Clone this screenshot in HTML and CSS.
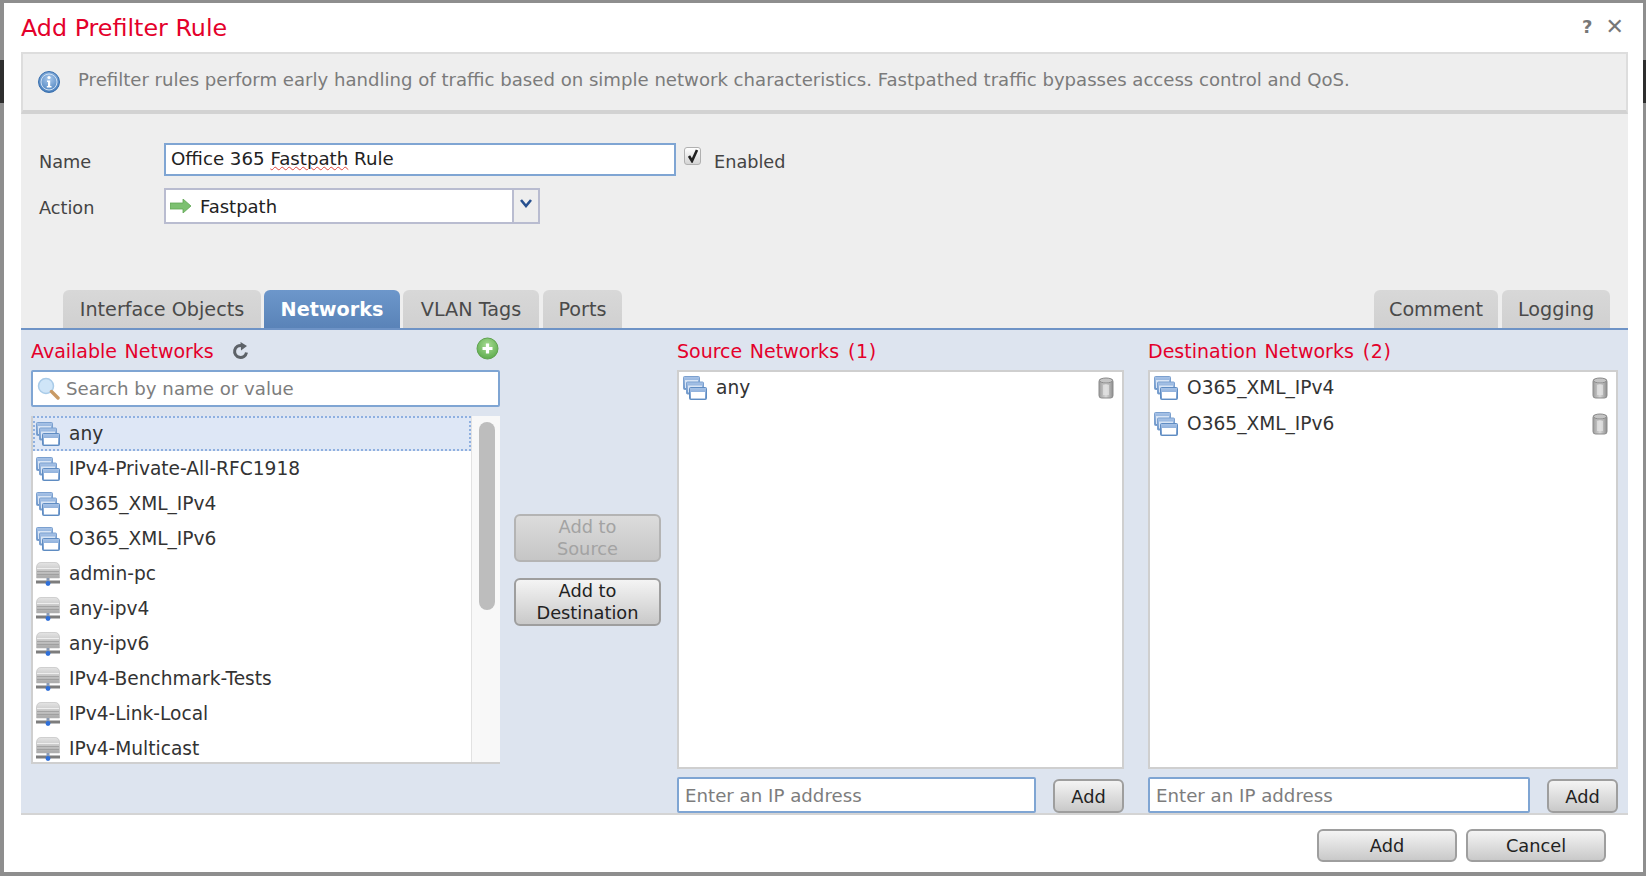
FILE: index.html
```html
<!DOCTYPE html>
<html lang="en">
<head>
<meta charset="utf-8">
<title>Add Prefilter Rule</title>
<link rel="stylesheet" href="styles.css">
</head>
<body>

<svg class="icon_defs" width="0" height="0">
  <defs>
    <linearGradient id="win_grad" x1="0" y1="0" x2="0" y2="1">
      <stop offset="0" stop-color="#a9c4e8"/>
      <stop offset="1" stop-color="#6a94c8"/>
    </linearGradient>
    <linearGradient id="host_grad" x1="0" y1="0" x2="0" y2="1">
      <stop offset="0" stop-color="#e4e4e4"/>
      <stop offset="0.4" stop-color="#cfcfcf"/>
      <stop offset="1" stop-color="#a8a8a8"/>
    </linearGradient>
    <linearGradient id="trash_grad" x1="0" y1="0" x2="1" y2="0">
      <stop offset="0" stop-color="#9c9c9c"/>
      <stop offset="0.5" stop-color="#d8d8d8"/>
      <stop offset="1" stop-color="#8e8e8e"/>
    </linearGradient>
    <radialGradient id="info_grad" cx="0.5" cy="0.35" r="0.7">
      <stop offset="0" stop-color="#a8c8ec"/>
      <stop offset="1" stop-color="#3f78b8"/>
    </radialGradient>
    <radialGradient id="plus_grad" cx="0.5" cy="0.35" r="0.7">
      <stop offset="0" stop-color="#a8dc94"/>
      <stop offset="1" stop-color="#58a848"/>
    </radialGradient>
    <symbol id="group_icon" viewBox="0 0 24 24">
      <rect x="0.5" y="0.5" width="16" height="13" rx="1" fill="url(#win_grad)" stroke="#7ba0cf"/>
      <rect x="2" y="4" width="13" height="8" fill="#d9e5f5"/>
      <rect x="3.5" y="6" width="17" height="12" rx="1" fill="url(#win_grad)" stroke="#7ba0cf"/>
      <rect x="5" y="9.5" width="14" height="7" fill="#d9e5f5"/>
      <rect x="6.5" y="11.5" width="17" height="12" rx="1" fill="url(#win_grad)" stroke="#5f8cc2"/>
      <rect x="8" y="16" width="14" height="6.5" fill="#fff"/>
    </symbol>
    <symbol id="host_icon" viewBox="0 0 24 24">
      <path d="M0.5 5 Q1 0.5 5 0.5 H19 Q23 0.5 23.5 5 V16 H0.5 Z" fill="url(#host_grad)" stroke="#b8b8b8" stroke-width="0.6"/>
      <rect x="1" y="6" width="22" height="1" fill="#eee"/>
      <rect x="1" y="9" width="22" height="1" fill="#a4a4a4"/>
      <rect x="1" y="12" width="22" height="1" fill="#a0a0a0"/>
      <rect x="0" y="18.5" width="24" height="3" fill="#7d7d7d"/>
      <rect x="10.5" y="16" width="3" height="4" fill="#8b9bb4"/>
      <circle cx="12" cy="21.5" r="2.4" fill="#2f6fd8"/>
    </symbol>
    <symbol id="trash_icon" viewBox="0 0 16 22">
      <rect x="1" y="2" width="14" height="19" rx="2.5" fill="url(#trash_grad)" stroke="#8b8b8b"/>
      <ellipse cx="8" cy="3.5" rx="6.5" ry="2.5" fill="#c4c4c4" stroke="#8b8b8b"/>
      <rect x="5" y="8" width="6" height="10" fill="#e4e4e4" opacity="0.7"/>
    </symbol>
  </defs>
</svg>

<div class="modal">

  <div class="modal_head">
    <h1>Add Prefilter Rule</h1>
    <div class="modal_tools">
      <span>?</span>
      <span class="close_x">✕</span>
    </div>
  </div>

  <div class="info_bar">
    <svg class="info_icon" width="22" height="22" viewBox="0 0 22 22">
      <circle cx="11" cy="11" r="10.5" fill="url(#info_grad)" stroke="#3a70ae"/>
      <circle cx="11" cy="11" r="8" fill="none" stroke="#cfe0f3" stroke-width="1"/>
      <circle cx="11" cy="6.5" r="1.6" fill="#fff"/>
      <path d="M9 9.5 H12.2 V15 H13.5 V16.5 H8.8 V15 H10 V11 H9 Z" fill="#fff"/>
    </svg>
    <p>Prefilter rules perform early handling of traffic based on simple network characteristics. Fastpathed traffic bypasses access control and QoS.</p>
  </div>

  <div class="rule_form">
    <div class="form_row name_row">
      <label>Name</label>
      <div class="text_box name_box">Office 365 <span class="misspelt">Fastpath</span> Rule</div>
      <span class="check_box">
        <svg width="12" height="14" viewBox="0 0 12 14"><path d="M2 7 L5 12 L10 1" fill="none" stroke="#222" stroke-width="2.6"/></svg>
      </span>
      <label class="enabled_label">Enabled</label>
    </div>
    <div class="form_row action_row">
      <label>Action</label>
      <div class="select_box">
        <svg width="22" height="14" viewBox="0 0 22 14"><path d="M0 4 H13 V0 L21 7 L13 14 V10 H0 Z" fill="#7cc070" stroke="#5fa653" stroke-width="0.8"/></svg>
        <span class="select_value">Fastpath</span>
        <span class="select_arrow">
          <svg width="12" height="9" viewBox="0 0 12 9"><path d="M1 1 L6 7 L11 1" fill="none" stroke="#27508f" stroke-width="2.6"/></svg>
        </span>
      </div>
    </div>
  </div>

  <div class="tab_bar">
    <div class="tab_group">
      <div class="tab tab_interface">Interface Objects</div>
      <div class="tab tab_networks active">Networks</div>
      <div class="tab tab_vlan">VLAN Tags</div>
      <div class="tab tab_ports">Ports</div>
    </div>
    <div class="tab_group">
      <div class="tab tab_comment">Comment</div>
      <div class="tab tab_logging">Logging</div>
    </div>
  </div>

  <div class="tab_body">

    <div class="col_available">
      <div class="col_title">
        <span>Available Networks</span>
        <svg class="refresh_icon" width="18" height="18" viewBox="0 0 18 18">
          <path d="M14.5 10.5 A6 6 0 1 1 10 3.6" fill="none" stroke="#5d6268" stroke-width="3"/>
          <path d="M8.5 0 L15 4 L9 8.5 Z" fill="#5d6268"/>
        </svg>
        <svg class="plus_icon" width="23" height="23" viewBox="0 0 23 23">
          <circle cx="11.5" cy="11.5" r="10.5" fill="url(#plus_grad)" stroke="#5ea24e"/>
          <path d="M11.5 6.5 V16.5 M6.5 11.5 H16.5" stroke="#fff" stroke-width="3.2"/>
        </svg>
      </div>
      <div class="text_box search_box">
        <svg width="23" height="23" viewBox="0 0 23 23">
          <circle cx="9" cy="9" r="7.5" fill="#cfe5f8" stroke="#a9cbe8" stroke-width="1.5"/>
          <path d="M14.5 14.5 L21 21" stroke="#c99a64" stroke-width="3.4" stroke-linecap="round"/>
        </svg>
        <span class="hint">Search by name or value</span>
      </div>
      <div class="network_list">
        <div class="list_rows">
          <div class="list_row selected"><svg class="row_icon"><use href="#group_icon"/></svg>any</div>
          <div class="list_row"><svg class="row_icon"><use href="#group_icon"/></svg>IPv4-Private-All-RFC1918</div>
          <div class="list_row"><svg class="row_icon"><use href="#group_icon"/></svg>O365_XML_IPv4</div>
          <div class="list_row"><svg class="row_icon"><use href="#group_icon"/></svg>O365_XML_IPv6</div>
          <div class="list_row"><svg class="row_icon"><use href="#host_icon"/></svg>admin-pc</div>
          <div class="list_row"><svg class="row_icon"><use href="#host_icon"/></svg>any-ipv4</div>
          <div class="list_row"><svg class="row_icon"><use href="#host_icon"/></svg>any-ipv6</div>
          <div class="list_row"><svg class="row_icon"><use href="#host_icon"/></svg>IPv4-Benchmark-Tests</div>
          <div class="list_row"><svg class="row_icon"><use href="#host_icon"/></svg>IPv4-Link-Local</div>
          <div class="list_row"><svg class="row_icon"><use href="#host_icon"/></svg>IPv4-Multicast</div>
        </div>
        <div class="scroll_track"><div class="scroll_thumb"></div></div>
      </div>
    </div>

    <div class="col_buttons">
      <button class="btn add_btn" disabled>Add to<br>Source</button>
      <button class="btn add_btn">Add to<br>Destination</button>
    </div>

    <div class="col_source">
      <div class="col_title"><span>Source Networks</span><span class="count">(1)</span></div>
      <div class="picked_box">
        <div class="picked_row"><svg class="row_icon"><use href="#group_icon"/></svg><span class="picked_name">any</span><svg class="trash_icon"><use href="#trash_icon"/></svg></div>
      </div>
      <div class="ip_row">
        <div class="text_box ip_box"><span class="hint">Enter an IP address</span></div>
        <button class="btn small_btn">Add</button>
      </div>
    </div>

    <div class="col_dest">
      <div class="col_title"><span>Destination Networks</span><span class="count">(2)</span></div>
      <div class="picked_box">
        <div class="picked_row"><svg class="row_icon"><use href="#group_icon"/></svg><span class="picked_name">O365_XML_IPv4</span><svg class="trash_icon"><use href="#trash_icon"/></svg></div>
        <div class="picked_row"><svg class="row_icon"><use href="#group_icon"/></svg><span class="picked_name">O365_XML_IPv6</span><svg class="trash_icon"><use href="#trash_icon"/></svg></div>
      </div>
      <div class="ip_row">
        <div class="text_box ip_box"><span class="hint">Enter an IP address</span></div>
        <button class="btn small_btn">Add</button>
      </div>
    </div>

  </div>

  <div class="modal_foot">
    <button class="btn foot_btn">Add</button>
    <button class="btn foot_btn">Cancel</button>
  </div>

</div>

</body>
</html>
```

FILE: styles.css
```css
*,*:after,*:before{
	box-sizing: border-box;
}
html,body{
	height: 100%;
}
body{
	margin: 0;
	padding: 3px 3px 4px 4px;
	overflow: hidden;
	font-family: "DejaVu Sans", sans-serif;
	font-size: 18px;
	color: #333;
	background: linear-gradient(to bottom, #8e8e8e 0, #8e8e8e 60px, #2e2e2e 60px, #2e2e2e 103px, #8e8e8e 103px);
}
.icon_defs{
	position: absolute;
}

.modal{
	width: 1639px;
	height: 869px;
	background: #fff;
	display: flex;
	flex-direction: column;
	padding: 0 15px 0 17px;
}

.modal_head{
	height: 49px;
	display: flex;
	align-items: center;
	justify-content: space-between;
}
h1{
	margin: 0;
	font-size: 23.8px;
	font-weight: normal;
	color: #e4002b;
}
.modal_tools{
	display: flex;
	align-items: center;
	gap: 13px;
	color: #777;
	font-size: 18px;
	font-weight: bold;
	margin: 0 4px 2px 0;
}
.close_x{
	font-size: 22px;
}

.info_bar{
	height: 62px;
	background: #eee;
	border-top: 2px solid #ddd;
	border-left: 2px solid #ddd;
	border-right: 2px solid #ddd;
	border-bottom: 4px solid #d2d2d2;
	display: flex;
	align-items: center;
	padding-left: 15px;
	color: #7b7b7b;
}
.info_icon{
	flex-shrink: 0;
}
.info_bar p{
	margin: 0 0 6px 18px;
	font-size: 18.1px;
	white-space: nowrap;
}

.rule_form{
	height: 175px;
	background: #eee;
	padding: 29px 0 0 18px;
}
.form_row{
	display: flex;
	align-items: center;
}
.form_row label{
	width: 125px;
	font-size: 17.7px;
	color: #444;
	padding-top: 4px;
}
.name_row{
	height: 33px;
}
.action_row{
	height: 36px;
	margin-top: 12px;
}
.text_box{
	background: #fff;
	border: 2px solid #7fa5d3;
	display: flex;
	align-items: center;
	white-space: pre;
}
.name_box{
	width: 512px;
	height: 33px;
	padding-left: 5px;
	color: #222;
	display: block;
	font-size: 18.2px;
	line-height: 28px;
}
.misspelt{
	text-decoration: underline wavy #e0443a 1px;
}
.check_box{
	width: 17px;
	height: 18px;
	margin: 0 0 8px 8px;
	background: linear-gradient(to bottom, #fff, #d4d4d4);
	border: 1px solid #b0b0b0;
	border-radius: 3px;
	display: flex;
	align-items: center;
	justify-content: center;
}
.form_row .enabled_label{
	width: auto;
	margin-left: 13px;
}
.select_box{
	width: 376px;
	height: 36px;
	background: #fff;
	border: 2px solid #b9bcd0;
	display: flex;
	align-items: center;
	padding-left: 4px;
	color: #222;
}
.select_value{
	margin-left: 8px;
	flex: 1;
}
.select_arrow{
	width: 26px;
	height: 100%;
	background: #eee;
	border-left: 2px solid #b9bcd0;
	display: flex;
	align-items: center;
	justify-content: center;
	padding-bottom: 6px;
}

.tab_bar{
	display: flex;
	justify-content: space-between;
	align-items: flex-end;
	height: 39px;
	padding: 0 18px 0 42px;
	background: #eee;
}
.tab_group{
	display: flex;
	gap: 3px;
}
.tab{
	height: 38px;
	background: linear-gradient(to bottom, #d8d8d8, #d0d0d0);
	border-radius: 6px 6px 0 0;
	display: flex;
	align-items: center;
	justify-content: center;
	color: #4a4a4a;
	font-size: 19.2px;
}
.tab.active{
	background: linear-gradient(to bottom, #6d97cb, #5a83b8);
	color: #fff;
	font-weight: bold;
}
.tab_interface{ width: 198px; }
.tab_networks{ width: 136px; }
.tab_vlan{ width: 136px; }
.tab_ports{ width: 79px; margin-left: 1px; }
.tab_comment{ width: 124px; }
.tab_logging{ width: 108px; margin-left: 1px; }

.tab_body{
	height: 487px;
	background: #dde4ef;
	border-top: 2px solid #6e93c6;
	border-bottom: 2px solid #d4d4d4;
	display: flex;
	padding: 1px 0 0 10px;
	flex-shrink: 0;
}
.col_title{
	height: 39px;
	display: flex;
	align-items: center;
	color: #e4002b;
	font-size: 19px;
	word-spacing: 1.5px;
}
.count{
	margin-left: 9px;
	letter-spacing: 0.6px;
}
.refresh_icon{
	margin-left: 18px;
}
.plus_icon{
	margin-left: auto;
	margin-right: 1px;
	margin-bottom: 4px;
}

.col_available{
	width: 469px;
}
.search_box{
	height: 37px;
	padding-left: 4px;
	border-radius: 2px;
}
.hint{
	color: #7d7d7d;
	font-size: 18.2px;
	margin-left: 6px;
}
.ip_box .hint{
	margin-left: 0;
}
.network_list{
	margin-top: 9px;
	height: 348px;
	background: #fff;
	border: 2px solid #cfcfcf;
	border-top: 0;
	border-right: 0;
	display: flex;
	overflow: hidden;
}
.list_rows{
	width: 438px;
	flex-shrink: 0;
}
.list_row{
	height: 35px;
	display: flex;
	align-items: center;
	padding-left: 3px;
	color: #333;
	font-size: 18.6px;
	white-space: nowrap;
}
.list_row.selected{
	background: #dee7f6;
	border: 2px dotted #8fb0e0;
	padding-left: 1px;
}
.row_icon{
	width: 24px;
	height: 24px;
	margin-right: 9px;
	flex-shrink: 0;
}
.scroll_track{
	flex: 1;
	background: #f8f8f8;
	border-left: 1px solid #e2e2e2;
	padding: 6px 0 0 7px;
}
.scroll_thumb{
	width: 16px;
	height: 188px;
	background: #bdbdbd;
	border-radius: 8px;
}

.col_buttons{
	width: 147px;
	margin-left: 14px;
	padding-top: 183px;
	display: flex;
	flex-direction: column;
	gap: 16px;
}

.btn{
	font-family: "DejaVu Sans", sans-serif;
	font-size: 17.8px;
	color: #222;
	background: linear-gradient(to bottom, #f4f4f4, #c9c9c9);
	border: 2px solid #9e9e9e;
	border-radius: 6px;
	padding: 0;
}
.add_btn{
	height: 48px;
	line-height: 22px;
}
.add_btn:disabled{
	color: #a3a3a3;
	background: linear-gradient(to bottom, #dcdcdc, #c6c6c6);
	border-color: #b4b4b4;
}
.small_btn{
	width: 71px;
	height: 34px;
	flex-shrink: 0;
}
.foot_btn{
	width: 140px;
	height: 33px;
}

.col_source{
	width: 447px;
	margin-left: 16px;
}
.col_dest{
	width: 470px;
	margin-left: 24px;
}
.picked_box{
	height: 399px;
	background: #fff;
	border: 2px solid #cfcfcf;
}
.picked_row{
	height: 36px;
	display: flex;
	align-items: center;
	padding: 0 0 5px 4px;
	color: #333;
	font-size: 18.6px;
}
.picked_name{
	flex: 1;
}
.trash_icon{
	width: 16px;
	height: 22px;
	margin-right: 8px;
}
.ip_row{
	margin-top: 8px;
	display: flex;
	justify-content: space-between;
	align-items: flex-end;
}
.ip_box{
	height: 36px;
	padding-left: 6px;
	border-radius: 2px;
}
.col_source .ip_box{
	width: 359px;
}
.col_dest .ip_box{
	width: 382px;
}

.modal_foot{
	flex: 1;
	display: flex;
	justify-content: flex-end;
	align-items: flex-start;
	gap: 9px;
	padding: 14px 22px 0 0;
}
```
